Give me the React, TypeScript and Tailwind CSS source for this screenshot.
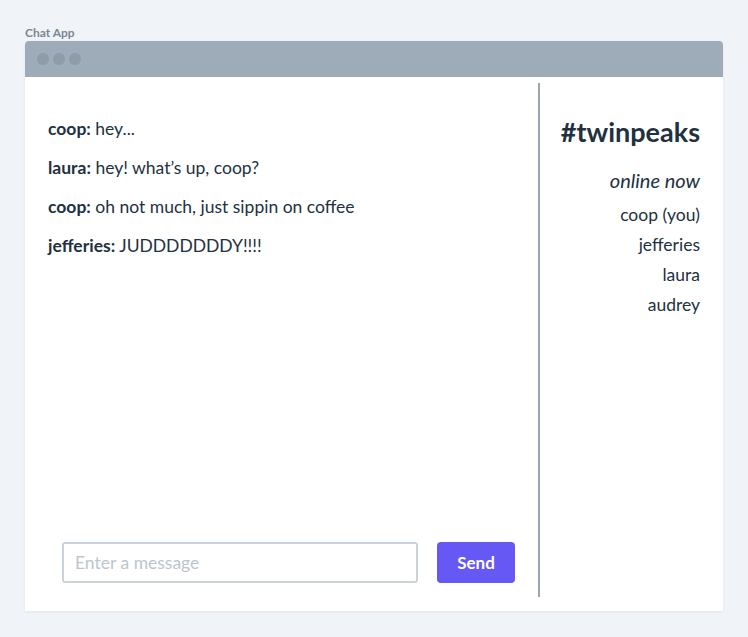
import React from "react";

const messages = [
  { user: "coop", text: "hey..." },
  { user: "laura", text: "hey! what\u2019s up, coop?" },
  { user: "coop", text: "oh not much, just sippin on coffee" },
  { user: "jefferies", text: "JUDDDDDDDY!!!!" },
];

const users = ["coop (you)", "jefferies", "laura", "audrey"];

export default function App() {
  return (
    <div
      className="min-h-[637px] w-[748px] bg-[#f0f4f8] px-[25px] pt-[26px]"
      style={{ fontFamily: "Lato, 'Open Sans', sans-serif" }}
    >
      <div className="text-[12px] font-bold leading-[14px] text-[#7b8794] mb-[1px]">Chat App</div>
      <div className="flex h-[570px] w-[698px] flex-col rounded-t-[4px] bg-white shadow-[0_1px_3px_rgba(0,0,0,0.06)]">
        <div className="flex h-[36px] items-center gap-[4px] rounded-t-[4px] bg-[#9eacb9] pl-[12px]">
          <span className="h-[12px] w-[12px] rounded-full bg-[#8d9baa]" />
          <span className="h-[12px] w-[12px] rounded-full bg-[#8d9baa]" />
          <span className="h-[12px] w-[12px] rounded-full bg-[#8d9baa]" />
        </div>
        <div className="flex flex-1 pt-[6px] pb-[14px] text-[#22313f]">
          <div className="flex w-[515px] flex-col border-r-2 border-[#9aa5b1]">
            <div className="flex flex-1 flex-col gap-[17px] pl-[23px] pt-[35px] text-[17.5px] leading-[22px]">
              {messages.map((m, i) => (
                <div key={i}>
                  <span className="font-bold">{m.user}:</span> {m.text}
                </div>
              ))}
            </div>
            <div className="flex items-center gap-[19px] pl-[37px] pb-[14px]">
              <input
                className="h-[41px] w-[356px] rounded-[3px] border-2 border-[#cbd2d9] px-[11px] text-[17.5px] text-[#22313f] outline-none placeholder:text-[#bcc5cf]"
                placeholder="Enter a message"
              />
              <button className="h-[41px] w-[78px] rounded-[4px] bg-[#6558f5] text-[17px] font-bold text-white">
                Send
              </button>
            </div>
          </div>
          <div className="flex flex-1 flex-col items-end pr-[23px] pt-[33px]">
            <div className="text-[27px] font-bold leading-[32px]">#twinpeaks</div>
            <div className="mt-[19px] text-[20px] italic leading-[26px]">online now</div>
            <div className="mt-[7px] flex flex-col items-end text-[17.5px] leading-[30px]">
              {users.map((u) => (
                <div key={u}>{u}</div>
              ))}
            </div>
          </div>
        </div>
      </div>
    </div>
  );
}
